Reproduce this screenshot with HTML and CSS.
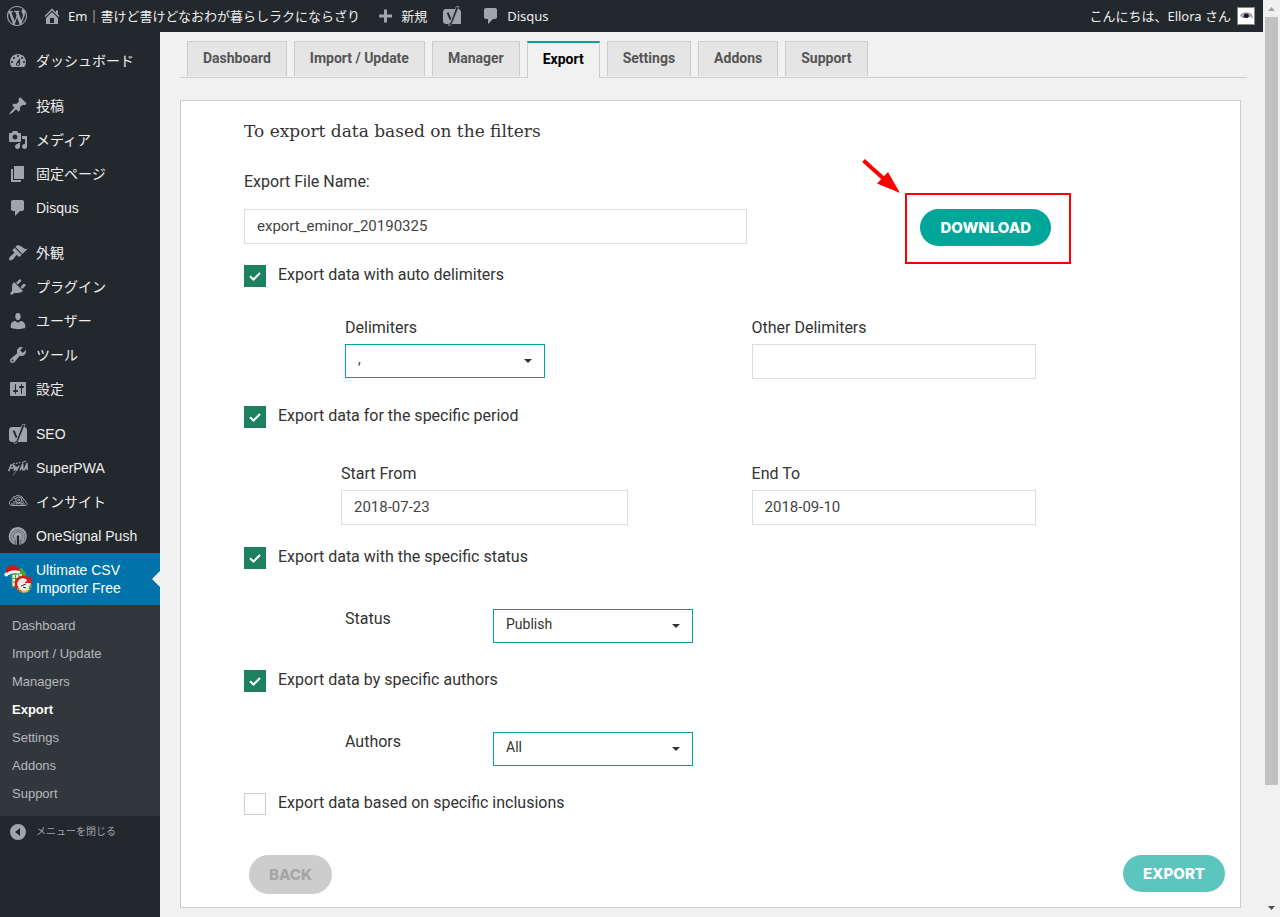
FILE: index.html
```html
<!DOCTYPE html>
<html lang="ja">
<head>
<meta charset="utf-8">
<title>Ultimate CSV Importer Free</title>
<link rel="stylesheet" href="styles.css">
</head>
<body>
<svg class="defs" aria-hidden="true">
  <symbol id="i-wordpress" viewBox="0 0 20 20"><path d="M20 10c0-5.51-4.49-10-10-10C4.48 0 0 4.49 0 10c0 5.52 4.48 10 10 10 5.51 0 10-4.48 10-10zM7.78 15.37L4.37 6.22c.55-.02 1.17-.08 1.17-.08.5-.06.44-1.13-.06-1.11 0 0-1.45.11-2.37.11-.18 0-.37 0-.58-.01C4.12 2.69 6.87 1.11 10 1.11c2.33 0 4.45.87 6.05 2.34-.68-.11-1.65.39-1.65 1.58 0 .74.45 1.36.9 2.1.35.61.55 1.36.55 2.46 0 1.49-1.4 5-1.4 5l-3.03-8.37c.54-.02.82-.17.82-.17.5-.05.44-1.25-.06-1.22 0 0-1.44.12-2.38.12-.87 0-2.33-.12-2.33-.12-.5-.03-.56 1.2-.06 1.22l.92.08 1.26 3.41zM17.41 10c.24-.64.74-1.87.43-4.25.7 1.29 1.05 2.71 1.05 4.25 0 3.29-1.73 6.24-4.4 7.78.97-2.59 1.94-5.2 2.92-7.78zM6.1 18.09C3.12 16.65 1.11 13.53 1.11 10c0-1.3.23-2.48.72-3.59C3.25 10.3 4.67 14.2 6.1 18.09zm4.03-6.63l2.58 6.98c-.86.29-1.76.45-2.71.45-.79 0-1.57-.11-2.29-.33.81-2.38 1.62-4.74 2.42-7.1z"/></symbol>
  <symbol id="i-home" viewBox="0 0 20 20"><path d="M16 8.5l1.53 1.53-1.06 1.06L10 4.6l-6.47 6.49-1.06-1.06L10 2.5l4 4v-2h2v4zm-6-2.46l6 5.99V18H4v-5.97zM12 17v-5H8v5h4z"/></symbol>
  <symbol id="i-plus" viewBox="0 0 20 20"><path d="M17 8.500v3h-5v5H9v-5H4v-3h5v-5h3v5h5z"/></symbol>
  <symbol id="i-comment" viewBox="0 0 20 20"><path d="M5 2h9c1.1 0 2 .9 2 2v7c0 1.1-.9 2-2 2h-2l-5 5v-5H5c-1.1 0-2-.9-2-2V4c0-1.1.9-2 2-2z"/></symbol>
  <symbol id="i-dashboard" viewBox="0 0 20 20"><path d="M3.76 16h12.48c1.1-1.37 1.76-3.11 1.76-5 0-4.42-3.58-8-8-8s-8 3.58-8 8c0 1.89.66 3.63 1.76 5zM10 4c.55 0 1 .45 1 1s-.45 1-1 1-1-.45-1-1 .45-1 1-1zM6 6c.55 0 1 .45 1 1s-.45 1-1 1-1-.45-1-1 .45-1 1-1zm8 0c.55 0 1 .45 1 1s-.45 1-1 1-1-.45-1-1 .45-1 1-1zm-5.370 5.550L12 7v6c0 1.100-.9 2-2 2s-2-.9-2-2c0-.57.24-1.080.63-1.450zM4 10c.55 0 1 .45 1 1s-.45 1-1 1-1-.45-1-1 .45-1 1-1zm12 0c.55 0 1 .45 1 1s-.45 1-1 1-1-.45-1-1 .45-1 1-1zm-5 3c0-.55-.45-1-1-1s-1 .45-1 1 .45 1 1 1 1-.45 1-1z"/></symbol>
  <symbol id="i-post" viewBox="0 0 20 20"><path d="M10.440 3.020l1.820-1.820 6.360 6.350-1.830 1.820c-1.050-.68-2.480-.57-3.410.36l-.75.75c-.92.93-1.040 2.350-.35 3.410l-1.830 1.820-2.410-2.410-2.800 2.790c-.42.42-3.380 2.710-3.800 2.290s1.860-3.390 2.280-3.810l2.790-2.790L4.100 9.360l1.830-1.820c1.050.69 2.480.57 3.400-.36l.75-.75c.93-.92 1.050-2.350.36-3.410z"/></symbol>
  <symbol id="i-media" viewBox="0 0 20 20"><path d="M13 11V4c0-.55-.45-1-1-1h-1.670L9 1H5L3.670 3H2c-.55 0-1 .45-1 1v7c0 .55.45 1 1 1h10c.55 0 1-.45 1-1zM7 4.500c1.380 0 2.500 1.120 2.500 2.500S8.380 9.500 7 9.500 4.500 8.380 4.500 7 5.620 4.500 7 4.500zM14 6h5v10.500c0 1.380-1.120 2.500-2.500 2.500S14 17.880 14 16.500s1.120-2.500 2.500-2.500c.17 0 .34.02.5.05V9h-3V6zm-4 8.050V13h2v3.500c0 1.380-1.120 2.500-2.500 2.500S7 17.880 7 16.500 8.120 14 9.500 14c.17 0 .34.02.5.05z"/></symbol>
  <symbol id="i-page" viewBox="0 0 20 20"><path d="M6 15V2h10v13H6zm-1 1h8v2H3V5h2v11z"/></symbol>
  <symbol id="i-brush" viewBox="0 0 20 20"><path d="M14.480 11.060L7.410 3.990l1.500-1.500c.5-.56 2.300-.47 3.510.32 1.210.8 1.430 1.280 2.910 2.100 1.180.64 2.450 1.260 4.450.85zm-.71.71L6.700 4.700 4.930 6.470c-.39.39-.39 1.020 0 1.410l1.060 1.060c.39.39.39 1.030 0 1.420-.6.6-1.430 1.110-2.210 1.690-.35.26-.7.53-1.010.84C1.430 14.230.4 16.080 1.400 17.070c.99 1 2.840-.03 4.180-1.360.31-.31.58-.66.85-1.020.57-.78 1.080-1.610 1.690-2.210.39-.39 1.020-.39 1.410 0l1.060 1.060c.39.39 1.020.39 1.410 0z"/></symbol>
  <symbol id="i-plug" viewBox="0 0 20 20"><path d="M13.110 4.360L9.870 7.600 8 5.730l3.240-3.240c.35-.34 1.050-.2 1.560.32.52.51.66 1.210.31 1.550zm-8 1.770l.91-1.120 9.010 9.010-1.190.84c-.71.71-2.630 1.160-3.820 1.160H6.140L4.900 17.260c-.59.59-1.540.59-2.120 0-.59-.58-.59-1.530 0-2.120l1.240-1.240v-3.880c0-1.130.4-3.190 1.090-3.890zm7.260 3.970l3.240-3.240c.34-.35 1.040-.21 1.550.31.52.51.66 1.210.31 1.550l-3.240 3.250z"/></symbol>
  <symbol id="i-user" viewBox="0 0 20 20"><path d="M10 9.250c-2.270 0-2.730-3.440-2.730-3.440C7 4.020 7.820 2 9.970 2c2.160 0 2.980 2.020 2.710 3.810 0 0-.41 3.440-2.680 3.440zm0 2.570L12.720 10c2.390 0 4.520 2.330 4.520 4.530v2.490s-3.650 1.130-7.240 1.130c-3.650 0-7.240-1.130-7.240-1.130v-2.490c0-2.250 1.940-4.480 4.470-4.480z"/></symbol>
  <symbol id="i-tools" viewBox="0 0 20 20"><path d="M16.680 9.770c-1.340 1.340-3.300 1.670-4.950.99l-5.410 6.520c-.99.99-2.590.99-3.580 0s-.99-2.590 0-3.570l6.520-5.420c-.68-1.650-.35-3.610.99-4.950 1.280-1.280 3.120-1.620 4.720-1.060l-2.890 2.890 2.820 2.820 2.860-2.870c.53 1.580.18 3.390-1.080 4.650zM3.810 16.210c.4.39 1.040.39 1.430 0 .4-.4.4-1.040 0-1.430-.39-.4-1.030-.4-1.430 0-.39.39-.39 1.030 0 1.430z"/></symbol>
  <symbol id="i-settings" viewBox="0 0 20 20"><path d="M18 16V4c0-.55-.45-1-1-1H3c-.55 0-1 .45-1 1v12c0 .55.45 1 1 1h14c.55 0 1-.45 1-1zM8 11h1c.55 0 1 .45 1 1s-.45 1-1 1H8v1.500c0 .28-.22.5-.5.5s-.5-.22-.5-.5V13H6c-.55 0-1-.45-1-1s.45-1 1-1h1V5.500c0-.28.22-.5.5-.5s.5.22.5.5V11zm5-2h-1c-.55 0-1-.45-1-1s.45-1 1-1h1V5.500c0-.28.22-.5.5-.5s.5.22.5.5V7h1c.55 0 1 .45 1 1s-.45 1-1 1h-1v5.500c0 .28-.22.5-.5.5s-.5-.22-.5-.5V9z"/></symbol>
  <symbol id="i-yoast" viewBox="0 0 20 20"><path d="M4 3h12.500C18 3.600 19 4.600 19 6v12H4c-1.700 0-3-1.300-3-3V6c0-1.700 1.300-3 3-3z"/><path d="M5.600 6.700l3 7" fill="none" stroke="#23282d" stroke-width="1.900"/><path d="M14.300.5h2.800L10.800 16c-.9 2.300-2.200 3.400-4.400 3.500v-1.900c1.500-.1 2.200-.9 2.500-2.300z" fill="#23282d" stroke="currentColor" stroke-width=".7"/></symbol>
  <symbol id="i-pwa" viewBox="0 0 20 20"><g fill="none" stroke="currentColor" stroke-linejoin="round"><path stroke-width="1.500" d="M.7 13.300L2.900 7h2.200c1.300 0 1 3-.7 3H2.200M7 7.500l-.8 4.700 2.200-3 .2 3 2.700-4.700M12 12.500L14.700 6l.1 6.500M12.800 10.300h2M16 12.500L19 5.500l.3 6.500M17 10h2"/><path stroke-width="1" d="M5 5.800l2-.6M8 5.500l2.200-.8M11 5l1.600-.6M14 4.500l4-1.300"/><path stroke-width=".6" d="M8 13l-3 4.500"/></g></symbol>
  <symbol id="i-insight" viewBox="0 0 20 20"><g fill="none" stroke="currentColor" stroke-width="1"><path d="M3.500 13.500h14c2 0 2-3 0-3.300.3-1.500-.7-2.400-1.800-2.400C15 5.500 13.500 4 11.500 4 10 3 8 3.400 7.300 4.600 5 4.300 3.700 6 4.200 8c-2.700.3-3.300 3-2.400 4.300.5.8 1 1.200 1.700 1.200z"/><circle cx="10.700" cy="8" r="3"/><circle cx="10.700" cy="8" r="1"/><path d="M5.500 6l2.500.5M5 10.500c1.500-1.500 3-.7 3 .5s1.700 1.500 3 .2 3 .8 4 0 .3-2-.7-2.400M13.700 6l1.300-.6M3 12h4M12 12h5"/></g></symbol>
  <symbol id="i-onesignal" viewBox="0 0 20 20"><path d="M10 1a9.200 9.200 0 0 0-5.700 16.400c.8.6 1.700 1 2.700 1.300h1.800V10h2.400v8.700H13A9.200 9.200 0 0 0 10 1z"/><g fill="none" stroke="#23282d" stroke-width=".5"><path d="M5.800 16.400a7 7 0 1 1 8.400 0"/><path d="M7 13.800a4.600 4.600 0 1 1 6 0"/></g><rect x="9.100" y="9.500" width="1.800" height="9.500" fill="#23282d"/><rect x="6.800" y="14" width=".7" height="5" fill="#23282d"/><rect x="12.500" y="14" width=".7" height="5" fill="#23282d"/></symbol>
  <symbol id="i-collapse" viewBox="0 0 20 20"><path fill-rule="evenodd" d="M10 2a8 8 0 1 0 0 16 8 8 0 0 0 0-16zm2 4v8l-5-4z"/></symbol>
</svg>

<div class="window">
  <div class="page">
    <header class="adminbar">
      <a class="bar-link" href="#" aria-label="WordPress"><svg class="icon"><use href="#i-wordpress"/></svg></a>
      <a class="bar-link" href="#"><svg class="icon"><use href="#i-home"/></svg>Em｜書けど書けどなおわが暮らしラクにならざり</a>
      <a class="bar-link" href="#"><svg class="icon"><use href="#i-plus"/></svg>新規</a>
      <a class="bar-link" href="#" aria-label="Yoast SEO"><svg class="icon"><use href="#i-yoast"/></svg></a>
      <a class="bar-link comments" href="#"><svg class="icon"><use href="#i-comment"/></svg>Disqus</a>
      <a class="bar-link account" href="#">こんにちは、Ellora さん
        <svg class="avatar" viewBox="0 0 16 16"><path d="M2 8.500C5 4.300 11 4 13.500 7.200l.8 3" fill="none" stroke="#8a8791" stroke-width="1.200"/><path d="M3.500 9.200C6 5.200 10.500 5 12.800 8.200 10 10.200 6.500 10.300 3.500 9.200z" fill="#6d6b80"/><circle cx="8.300" cy="7.800" r="2.300" fill="#17152b"/></svg>
      </a>
    </header>
    <div class="body">
      <nav class="sidebar" aria-label="メインメニュー">
        <ul class="menu">
          <li><a class="item" href="#"><svg class="icon"><use href="#i-dashboard"/></svg>ダッシュボード</a></li>
        </ul>
        <ul class="menu">
          <li><a class="item" href="#"><svg class="icon"><use href="#i-post"/></svg>投稿</a></li>
          <li><a class="item" href="#"><svg class="icon"><use href="#i-media"/></svg>メディア</a></li>
          <li><a class="item" href="#"><svg class="icon"><use href="#i-page"/></svg>固定ページ</a></li>
          <li><a class="item" href="#"><svg class="icon"><use href="#i-comment"/></svg>Disqus</a></li>
        </ul>
        <ul class="menu">
          <li><a class="item" href="#"><svg class="icon"><use href="#i-brush"/></svg>外観</a></li>
          <li><a class="item" href="#"><svg class="icon"><use href="#i-plug"/></svg>プラグイン</a></li>
          <li><a class="item" href="#"><svg class="icon"><use href="#i-user"/></svg>ユーザー</a></li>
          <li><a class="item" href="#"><svg class="icon"><use href="#i-tools"/></svg>ツール</a></li>
          <li><a class="item" href="#"><svg class="icon"><use href="#i-settings"/></svg>設定</a></li>
        </ul>
        <ul class="menu">
          <li><a class="item" href="#"><svg class="icon"><use href="#i-yoast"/></svg>SEO</a></li>
          <li><a class="item" href="#"><svg class="icon"><use href="#i-pwa"/></svg>SuperPWA</a></li>
          <li><a class="item" href="#"><svg class="icon"><use href="#i-insight"/></svg>インサイト</a></li>
          <li><a class="item" href="#"><svg class="icon"><use href="#i-onesignal"/></svg>OneSignal Push</a></li>
          <li>
            <a class="item current" href="#">
              <svg class="csv-logo" viewBox="0 0 28 28">
                <path d="M7 6l11-3 4 5v12L8 23z" fill="#4a9e3c"/><path d="M8.500 10l9.500-1v12H8.500z" fill="#e6f3df"/><path d="M11.500 10v11M14.800 9v12M8.500 13.500h10M8.500 17h10" stroke="#4a9e3c" stroke-width="1"/>
                <path d="M2 7C2 2 6 -.2 9.500 .2c4 .4 5.800 2.800 6.300 6.300L3.500 9.500z" fill="#d9121c"/><path d="M3.300 7.500C7 5 12 4.500 16 6.200l-.4 2.600C12 7.500 8 8 4.400 10.300z" fill="#fff"/><circle cx="2.300" cy="9.500" r="2" fill="#f3f3f3"/>
                <circle cx="20" cy="20" r="7" fill="#e9eee9"/><path d="M13.300 23A7 7 0 0 1 24.500 14.600" fill="none" stroke="#e3151d" stroke-width="2.600"/><path d="M20.500 18h7v-7.500z" fill="#e3151d"/>
                <path d="M13.500 22.800c1 2.200 2.700 3.500 5 4" fill="none" stroke="#ef6a1f" stroke-width="2.200" stroke-dasharray="2.500 .8"/><path d="M18.500 26.700c3 .5 5.300-.4 7-2.600" fill="none" stroke="#f5b21a" stroke-width="2.200" stroke-dasharray="2.500 .8"/><path d="M25.500 24c1-1.300 1.400-2.800 1.300-4.500" fill="none" stroke="#47a83e" stroke-width="2.200"/>
                <path d="M17 21l5-2M19 22l3 1" stroke="#333" stroke-width="1"/>
              </svg>
              <span>Ultimate CSV Importer Free</span>
            </a>
            <ul class="submenu">
              <li><a href="#">Dashboard</a></li>
              <li><a href="#">Import / Update</a></li>
              <li><a href="#">Managers</a></li>
              <li><a class="active" href="#">Export</a></li>
              <li><a href="#">Settings</a></li>
              <li><a href="#">Addons</a></li>
              <li><a href="#">Support</a></li>
            </ul>
          </li>
        </ul>
        <button class="collapse" type="button"><svg class="icon"><use href="#i-collapse"/></svg>メニューを閉じる</button>
      </nav>

      <main class="content">
        <nav class="tabs" aria-label="CSV Importer">
          <a class="tab" href="#">Dashboard</a>
          <a class="tab" href="#">Import / Update</a>
          <a class="tab" href="#">Manager</a>
          <a class="tab selected" href="#">Export</a>
          <a class="tab" href="#">Settings</a>
          <a class="tab" href="#">Addons</a>
          <a class="tab" href="#">Support</a>
        </nav>

        <form class="panel">
          <h1 class="title">To export data based on the filters</h1>
          <label class="file-label" for="file">Export File Name:</label>
          <div class="file-row">
            <input class="text" id="file" type="text" value="export_eminor_20190325">
            <div class="download">
              <button class="pill primary" type="button">DOWNLOAD</button>
              <span class="marker"></span>
              <svg class="arrow" viewBox="0 0 42 38"><path d="M3.500 3.500L24 22" stroke="#f00" stroke-width="4"/><path d="M40 36L17 26.500 28 15z" fill="#f00"/></svg>
            </div>
          </div>

          <label class="check first"><span class="box"><input type="checkbox" checked><svg viewBox="0 0 22 22"><path d="M6 11.200l3.500 3.300L16 8"/></svg></span>Export data with auto delimiters</label>
          <div class="pair delimiters">
            <div class="field">
              <label for="delim">Delimiters</label>
              <span class="select"><select id="delim"><option>,</option></select><svg viewBox="0 0 8 4"><path d="M0 0h8L4 4z"/></svg></span>
            </div>
            <div class="field">
              <label for="other">Other Delimiters</label>
              <input class="text" id="other" type="text">
            </div>
          </div>

          <label class="check"><span class="box"><input type="checkbox" checked><svg viewBox="0 0 22 22"><path d="M6 11.200l3.500 3.300L16 8"/></svg></span>Export data for the specific period</label>
          <div class="pair period">
            <div class="field">
              <label for="from">Start From</label>
              <input class="text" id="from" type="text" value="2018-07-23">
            </div>
            <div class="field">
              <label for="to">End To</label>
              <input class="text" id="to" type="text" value="2018-09-10">
            </div>
          </div>

          <label class="check after-period"><span class="box"><input type="checkbox" checked><svg viewBox="0 0 22 22"><path d="M6 11.200l3.500 3.300L16 8"/></svg></span>Export data with the specific status</label>
          <div class="inline-field">
            <label for="status">Status</label>
            <span class="select"><select id="status"><option>Publish</option></select><svg viewBox="0 0 8 4"><path d="M0 0h8L4 4z"/></svg></span>
          </div>

          <label class="check"><span class="box"><input type="checkbox" checked><svg viewBox="0 0 22 22"><path d="M6 11.200l3.500 3.300L16 8"/></svg></span>Export data by specific authors</label>
          <div class="inline-field">
            <label for="authors">Authors</label>
            <span class="select"><select id="authors"><option>All</option></select><svg viewBox="0 0 8 4"><path d="M0 0h8L4 4z"/></svg></span>
          </div>

          <label class="check"><span class="box"><input type="checkbox"></span>Export data based on specific inclusions</label>

          <div class="actions">
            <button class="pill back" type="button">BACK</button>
            <button class="pill export" type="button">EXPORT</button>
          </div>
        </form>
      </main>
    </div>
  </div>
  <div class="scrollbar" aria-hidden="true">
    <svg viewBox="0 0 17 17"><path d="M5 11h7L8.500 7z" fill="#a3a3a3"/></svg>
    <span class="track"><span class="thumb"></span></span>
    <svg viewBox="0 0 17 17"><path d="M5 6h7l-3.500 4z" fill="#505050"/></svg>
  </div>
</div>
</body>
</html>
```

FILE: styles.css
```css
* { box-sizing: border-box; }

body {
  margin: 0;
  background: #f1f1f1;
  color: #333;
  font-family: Roboto, "Noto Sans CJK JP", sans-serif;
  font-size: 16px;
}

ul { margin: 0; padding: 0; list-style: none; }
a { color: inherit; text-decoration: none; }
button, input, select { font: inherit; color: inherit; }
svg { display: block; flex: none; }

.defs { position: absolute; width: 0; height: 0; }
.icon { width: 20px; height: 20px; color: #a0a5aa; fill: currentColor; }

.window { display: flex; min-height: 100vh; }
.page { display: flex; flex: 1; flex-direction: column; min-width: 0; }

/* Top bar */
.adminbar {
  display: flex;
  align-items: center;
  gap: 15px;
  height: 32px;
  padding: 0 8px 0 7px;
  background: #23282d;
  color: #eee;
  font-family: "Noto Sans", "Noto Sans CJK JP", sans-serif;
  font-size: 13px;
  white-space: nowrap;
}
.bar-link { display: flex; align-items: center; gap: 6px; line-height: 18px; }
.comments { margin-left: 4px; }
.account { margin-left: auto; }
.avatar { width: 18px; height: 18px; border: 1px solid #82878c; background: #fff; }

.body { display: flex; flex: 1; }

/* Side menu */
.sidebar {
  flex: none;
  width: 160px;
  padding-top: 12px;
  background: #23282d;
  color: #eee;
  font-family: "Liberation Sans", "Noto Sans CJK JP", sans-serif;
  font-size: 14px;
  line-height: 18px;
}
.menu + .menu { margin-top: 11px; }
.item { display: flex; align-items: center; gap: 8px; min-height: 34px; padding: 0 8px; }
.item.current {
  position: relative;
  gap: 4px;
  padding: 8px 30px 8px 4px;
  background: #0073aa;
  color: #fff;
}
.item.current::after {
  content: "";
  position: absolute;
  top: 18px;
  right: 0;
  border: 8px solid transparent;
  border-left: 0;
  border-right-color: #f1f1f1;
}
.csv-logo { width: 28px; height: 28px; }
.submenu { padding: 7px 12px 8px; background: #32373c; color: #b4b9be; font-size: 13px; line-height: 28px; }
.submenu a { display: block; }
.submenu .active { color: #fff; font-weight: 700; }
.collapse {
  display: flex;
  align-items: center;
  gap: 8px;
  width: 100%;
  padding: 6px 8px;
  border: 0;
  background: none;
  color: #a0a5aa;
  font-size: 10px;
}

/* Tabs */
.content { flex: 1; min-width: 0; padding: 9px 16px 9px 20px; }
.tabs {
  display: flex;
  gap: 7px;
  padding-left: 7px;
  border-bottom: 1px solid #ccc;
  font-size: 14px;
  font-weight: 700;
  line-height: 24px;
}
.tab {
  margin-bottom: 1px;
  padding: 4px 15px 6px;
  border: 1px solid #ccc;
  border-bottom: 0;
  background: #e5e5e5;
  color: #555;
}
.tab.selected {
  margin-bottom: -1px;
  border-top: 2px solid #00a699;
  background: #f1f1f1;
  color: #000;
}

/* Form */
.panel {
  display: flex;
  flex-direction: column;
  margin: 22px 6px 0 0;
  padding: 18px 15px 13px 63px;
  border: 1px solid #ccc;
  background: #fff;
  line-height: 20px;
}
.title {
  margin: 0;
  font-family: "DejaVu Serif", serif;
  font-size: 17px;
  font-weight: 400;
  line-height: 24px;
}
.file-label { margin-top: 29px; }
.file-row { display: grid; grid-template-columns: 504fr 478fr; margin-top: 17px; }
.text {
  width: 100%;
  height: 35px;
  padding: 0 12px 2px;
  border: 1px solid #ddd;
  background: #fff;
  color: #444;
  font-size: 15px;
}
.download { position: relative; justify-self: start; margin-left: 173px; }
.marker { position: absolute; inset: -16px -20px -18px -15px; border: 2px solid #f00; pointer-events: none; }
.arrow { position: absolute; top: -52px; left: -60px; width: 42px; height: 38px; }

.check { display: flex; gap: 12px; margin-top: 27px; }
.check.first { margin-top: 19px; }
.check.after-period { margin-top: 22px; }
.box { position: relative; width: 22px; height: 22px; }
.box input {
  display: block;
  width: 22px;
  height: 22px;
  margin: 0;
  appearance: none;
  border: 1px solid #d2ccc8;
  background: #fff;
}
.box input:checked { border-color: #1d8060; background: #1d8060; }
.box svg { position: absolute; inset: 0; fill: none; stroke: #fff; stroke-width: 2; pointer-events: none; }

.pair { display: grid; grid-template-columns: 407fr 474fr; padding-left: 101px; }
.delimiters { margin-top: 31px; }
.delimiters .text { width: 60%; }
.period { grid-template-columns: 411fr 474fr; margin-top: 36px; padding-left: 97px; }
.period .field:first-child .text { width: 70%; }
.period .field:last-child .text { width: 60%; }
.field { display: flex; flex-direction: column; gap: 6px; }
.inline-field { display: grid; grid-template-columns: 148px 1fr; margin-top: 40px; padding-left: 101px; }

.select { position: relative; width: 200px; }
.select select {
  display: block;
  width: 100%;
  height: 34px;
  padding: 0 12px 4px;
  appearance: none;
  border: 1px solid #00a699;
  border-radius: 0;
  background: #fff;
  font-size: 14px;
}
.select svg { position: absolute; top: 15px; right: 13px; width: 8px; height: 4px; fill: #333; pointer-events: none; }

.pill {
  height: 37px;
  padding: 0 20px;
  border: 0;
  border-radius: 20px;
  color: #fff;
  font-family: Inter, sans-serif;
  font-size: 15px;
  font-weight: 800;
}
.primary { background: #00a699; }
.actions { display: flex; justify-content: space-between; align-items: flex-start; margin-top: 40px; padding-left: 5px; }
.back { height: 39px; background: #cdcdcd; color: #a5a5a5; }
.export { background: #5cc5bd; }

/* Scroll bar */
.scrollbar { display: flex; flex-direction: column; width: 17px; }
.scrollbar svg { width: 17px; height: 17px; }
.track { display: flex; flex: 1; flex-direction: column; padding: 0 2px; }
.thumb { height: 87%; background: #c1c1c1; }
```
